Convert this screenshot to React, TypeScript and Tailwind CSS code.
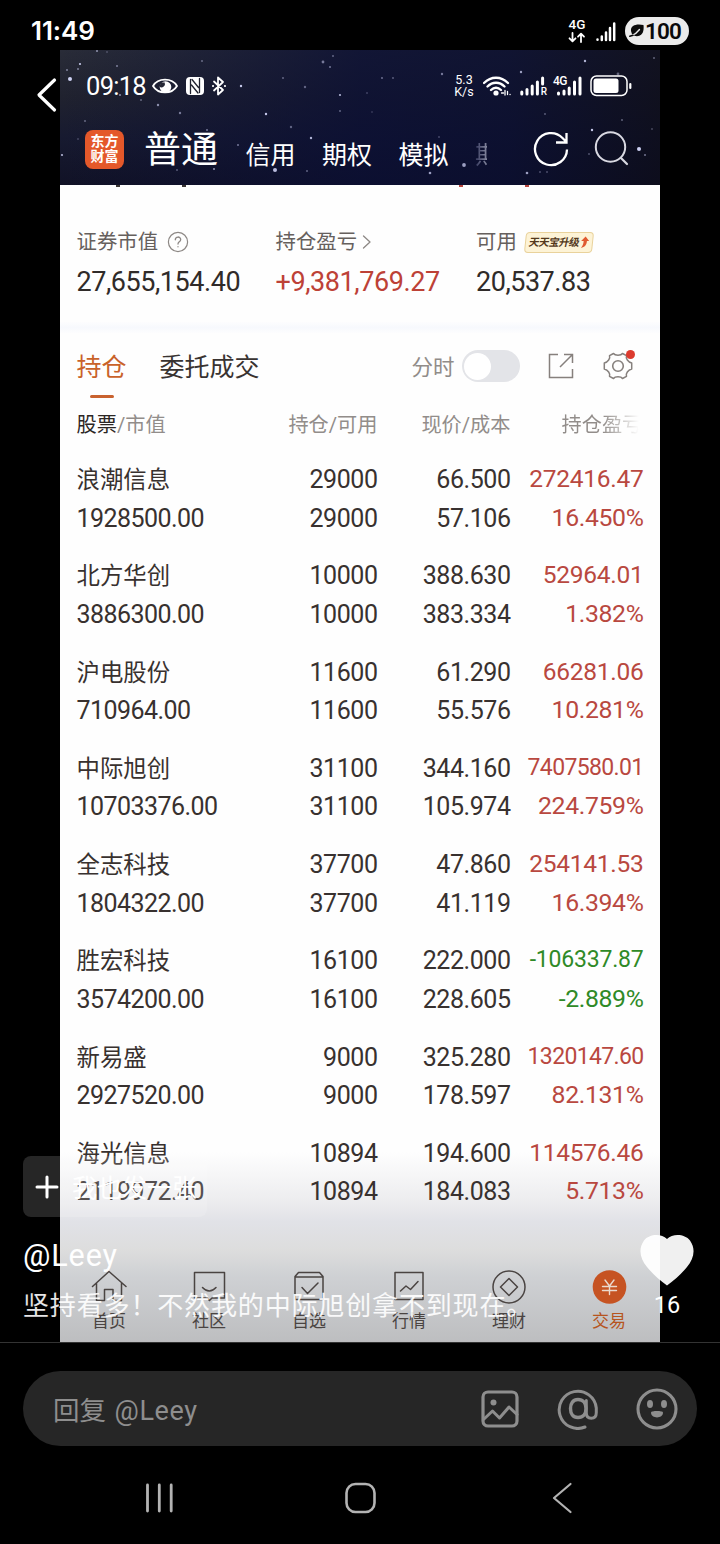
import React from "react";

const cjk = "font-['Roboto','Noto_Sans_CJK_SC',sans-serif]";

type Holding = {
  name: string;
  value: string;
  held: string;
  free: string;
  price: string;
  cost: string;
  profit: string;
  rate: string;
};

const holdings: Holding[] = [
  { name: "浪潮信息", value: "1928500.00", held: "29000", free: "29000", price: "66.500", cost: "57.106", profit: "272416.47", rate: "16.450%" },
  { name: "北方华创", value: "3886300.00", held: "10000", free: "10000", price: "388.630", cost: "383.334", profit: "52964.01", rate: "1.382%" },
  { name: "沪电股份", value: "710964.00", held: "11600", free: "11600", price: "61.290", cost: "55.576", profit: "66281.06", rate: "10.281%" },
  { name: "中际旭创", value: "10703376.00", held: "31100", free: "31100", price: "344.160", cost: "105.974", profit: "7407580.01", rate: "224.759%" },
  { name: "全志科技", value: "1804322.00", held: "37700", free: "37700", price: "47.860", cost: "41.119", profit: "254141.53", rate: "16.394%" },
  { name: "胜宏科技", value: "3574200.00", held: "16100", free: "16100", price: "222.000", cost: "228.605", profit: "-106337.87", rate: "-2.889%" },
  { name: "新易盛", value: "2927520.00", held: "9000", free: "9000", price: "325.280", cost: "178.597", profit: "1320147.60", rate: "82.131%" },
  { name: "海光信息", value: "2119972.40", held: "10894", free: "10894", price: "194.600", cost: "184.083", profit: "114576.46", rate: "5.713%" },
];

const stars: [number, number, number, number][] = [
  [10, 29, 2, 0.95], [20, 14, 1.1, 0.9], [18, 19, 1, 0.5], [7, 20, 1, 0.5], [37, 1, 1, 0.6], [47, 2, 0.8, 0.4],
  [57, 16, 1, 0.5], [98, 55, 1.2, 0.6], [120, 63, 1.2, 0.5], [81, 50, 1, 0.4], [60, 45, 1, 0.6], [181, 36, 1.2, 0.9],
  [142, 11, 1, 0.4], [206, 64, 1.2, 0.9], [223, 28, 1, 0.4], [263, 12, 1.4, 0.5], [270, 17, 1, 0.5], [273, 6, 1, 0.4],
  [245, 37, 1.2, 0.4], [280, 45, 1.1, 0.8], [280, 61, 1, 0.4], [231, 77, 1.2, 0.4], [251, 88, 1.2, 0.8], [215, 120, 2, 0.85],
  [147, 80, 1, 0.5], [25, 71, 1, 0.4], [2, 105, 1.1, 0.8], [18, 89, 0.8, 0.4], [178, 95, 1, 0.5], [154, 119, 1.1, 0.6],
  [117, 120, 0.9, 0.4], [247, 121, 1, 0.4], [322, 28, 0.9, 0.5], [333, 28, 0.9, 0.4], [382, 24, 1.2, 0.5], [307, 43, 0.8, 0.4],
  [312, 62, 0.8, 0.3], [461, 22, 1.2, 0.7], [525, 11, 1.2, 0.8], [558, 24, 1.4, 0.4], [594, 8, 1, 0.4], [485, 64, 0.9, 0.4],
  [562, 70, 1, 0.4], [532, 80, 1.2, 0.9], [579, 99, 2, 0.95], [585, 105, 1, 0.5], [404, 115, 1.9, 0.7], [370, 123, 1.3, 0.7],
  [467, 123, 1.3, 0.7], [480, 122, 1, 0.3], [487, 122, 1, 0.3], [379, 87, 0.9, 0.3], [529, 104, 1.1, 0.3], [592, 79, 0.9, 0.3],
];

function Svg({ w, h, children, className = "" }: { w: number; h: number; children: React.ReactNode; className?: string }) {
  return (
    <svg
      width={w}
      height={h}
      viewBox={`0 0 ${w} ${h}`}
      fill="none"
      stroke="currentColor"
      strokeLinecap="round"
      strokeLinejoin="round"
      className={`block shrink-0 ${className}`}
    >
      {children}
    </svg>
  );
}

function DeviceStatus() {
  return (
    <div className="flex h-[50px] items-center justify-between pt-[11px] pr-[31px] pb-0 pl-[31px] text-white">
      <span className="font-['Inter',sans-serif] text-[26px] leading-[40px] font-semibold tracking-[-0.1px]">11:49</span>
      <div className="flex items-center">
        <div className="flex w-[18px] flex-col items-center">
          <span className="font-['Roboto',sans-serif] text-[13.500px] leading-[11px] font-medium">4G</span>
          <Svg w={18} h={11} className="mt-[2px]">
            <path d="M4.5 1v8M1.5 6.3l3 3 3-3M13 10V2M10 4.7l3-3 3 3" strokeWidth={1.8} />
          </Svg>
        </div>
        <Svg w={20} h={20} className="mt-[3px] ml-[10px]">
          <path d="M1.500 17.500v.3M5.800 14.500v3.500M10 10.500V18M14 6v12M18.200 1.500V18" strokeWidth={2.500} />
        </Svg>
        <div className="ml-[9px] flex h-[28px] w-[64px] items-center rounded-full bg-[#ebebeb] pl-[4px] text-[#0a0a0a]">
          <Svg w={16} h={16}>
            <path d="M3 11C-.5 4 5 0 14.500 2c.8 7-1.500 12-8.500 11z" fill="currentColor" stroke="none" />
            <path d="M2 13C4.500 12 8 10 10.500 6.500" stroke="#ebebeb" strokeWidth={1.300} />
            <path d="M.8 13.300 4 12.300" strokeWidth={1.500} />
          </Svg>
          <span className="font-['Roboto',sans-serif] text-[22.500px] leading-[28px] font-semibold tracking-[-0.800px]">100</span>
        </div>
      </div>
    </div>
  );
}

function SkyHeader() {
  return (
    <header className="relative h-[135px] shrink-0 overflow-hidden bg-[linear-gradient(180deg,#292c38_0%,#20222f_35%,#171a30_65%,#111226_100%)] text-white">
      <div className="absolute inset-0 bg-[linear-gradient(90deg,transparent_0%,rgba(10,14,52,0.75)_50%,rgba(10,14,48,0.8)_75%,rgba(12,12,26,0.8)_100%)]" />
      <svg className="absolute inset-0" width="600" height="135" viewBox="0 0 600 135">
        {stars.map(([x, y, r, o]) => (
          <circle key={`${x}-${y}`} cx={x} cy={y} r={r} fill="#d9dcff" opacity={o} />
        ))}
      </svg>
      <div className="relative flex h-[72px] items-center justify-between pr-[28px] pl-[26px]">
        <div className="flex items-center">
          <span className="font-['Roboto',sans-serif] text-[25.500px] leading-[30px] tracking-[-0.700px]">09:18</span>
          <Svg w={26} h={20} className="ml-[6px]">
            <path d="M1 10C6 1.500 20 1.500 25 10 20 18.500 6 18.500 1 10z" strokeWidth={1.800} />
            <circle cx="13.500" cy="11" r="5.800" fill="currentColor" stroke="none" />
            <path d="M8.500 6.500h4.200a3.600 3.600 0 0 1-5 4.500z" fill="#252735" stroke="none" />
          </Svg>
          <Svg w={18} h={18} className="ml-[8px]">
            <rect x="0" y="0" width="18" height="18" rx="4" fill="currentColor" stroke="none" />
            <path d="M4.500 16.500V2.500M13.500 15.500V1.500M6 2.500l6.500 8M5.500 8l6.500 8" stroke="#20222f" strokeWidth={1.300} />
          </Svg>
          <Svg w={14} h={20} className="ml-[8px]">
            <path d="m2 5.500 9 8.500-5 4.500v-17L11 6l-9 8.500" strokeWidth={1.800} />
            <path d="M0.900 10h.2M12.900 10h.2" strokeWidth={2} />
          </Svg>
        </div>
        <div className="flex items-center">
          <div className="mr-[9px] flex w-[20px] flex-col items-center font-['Roboto',sans-serif] text-[12.500px] leading-[12px]">
            <span>5.3</span>
            <span>K/s</span>
          </div>
          <Svg w={28} h={20}>
            <path d="M1 7c7-7 17-7 24 0M4.500 10.500c5-5 12-5 17 0M8 14c3-3 7-3 10 0" strokeWidth={2.300} />
            <circle cx="13" cy="17" r="2.600" fill="currentColor" stroke="none" />
            <path d="M18.500 17h2M22 14.500v4.500M24.500 15.500v3M27 18.500h.1" strokeWidth={1.300} />
          </Svg>
          <div className="relative ml-[9px]">
            <Svg w={27} h={20}>
              <path d="M1.800 16v2M7 13.500V18M12.200 10v8M17.400 6v12M22.600 2v6" strokeWidth={3} />
            </Svg>
            <span className="absolute right-0 bottom-0 font-['Roboto',sans-serif] text-[10px] leading-[9px] font-medium">R</span>
          </div>
          <div className="relative ml-[6px]">
            <Svg w={30} h={20}>
              <path d="M5.500 17v1M11 15v3M16.200 12v6M21.500 6v12M27 2v16" strokeWidth={3} />
            </Svg>
            <span className="absolute top-[-1px] left-0 font-['Roboto',sans-serif] text-[12px] leading-[12px] font-medium tracking-[-0.500px]">4G</span>
          </div>
          <Svg w={42} h={22} className="ml-[7px]">
            <rect x="1" y="1" width="36" height="19.500" rx="5.500" strokeWidth={1.500} />
            <rect x="3.500" y="3.500" width="25" height="14.500" rx="2.500" fill="currentColor" stroke="none" />
            <path d="M40.300 9v4" strokeWidth={2.200} />
          </Svg>
        </div>
      </div>
      <nav className={`relative flex h-[54px] items-center pl-[25px] ${cjk}`}>
        <div className="flex h-[39px] w-[39px] flex-col items-center justify-center rounded-[8px] bg-[#e4582a] text-[14px] leading-[15.500px] font-bold">
          <span>东方</span>
          <span>财富</span>
        </div>
        <span className="ml-[20px] pt-[4px] text-[37px] leading-[54px]">普通</span>
        <div className="flex items-center gap-[26.500px] pt-[14px] pl-[27.500px] text-[25px] leading-[30px]">
          <span>信用</span>
          <span>期权</span>
          <span>模拟</span>
          <span className="w-[12px] overflow-hidden bg-[linear-gradient(90deg,#34375c,#85889f)] bg-clip-text text-transparent">期</span>
        </div>
        <Svg w={36} h={36} className="absolute top-[9px] left-[473px]">
          <path d="M34 18.500A16 16 0 1 1 29.500 7l4 4M33.500 2v9.500H23" strokeWidth={2.300} strokeLinecap="butt" strokeLinejoin="miter" />
        </Svg>
        <Svg w={36} h={36} className="absolute top-[8px] left-[534px] text-[#d9d9e2]">
          <circle cx="16.500" cy="17" r="14.700" strokeWidth={2} />
          <path d="m27 28 6 6" strokeWidth={2.200} />
        </Svg>
      </nav>
    </header>
  );
}

function Summary() {
  return (
    <section className={`flex h-[137px] pt-[41px] pl-[16.500px] ${cjk}`}>
      <div className="w-[199px]">
        <div className="flex h-[32px] items-center text-[20.400px] text-[#66605d]">
          证券市值
          <Svg w={22} h={22} className="ml-[9px] text-[#8d8885]">
            <circle cx="11" cy="11" r="9.600" strokeWidth={1.200} />
            <path d="M8.300 8.800c0-3.700 5.400-3.600 5.400-.3 0 2.300-2.700 2.400-2.700 4.500M11 15.600v.2" strokeWidth={1.300} />
          </Svg>
        </div>
        <div className="mt-[4px] text-[27px] leading-[40px] tracking-[-0.450px] text-[#302b29]">27,655,154.40</div>
      </div>
      <div className="w-[200px]">
        <div className="flex h-[32px] items-center text-[20.400px] text-[#66605d]">
          持仓盈亏
          <Svg w={10} h={14} className="ml-[5px] text-[#8d8885]">
            <path d="m1.500 1 6.500 6-6.500 6" strokeWidth={1.300} />
          </Svg>
        </div>
        <div className="mt-[4px] text-[27px] leading-[40px] tracking-[-0.420px] text-[#bd4136]">+9,381,769.27</div>
      </div>
      <div className="pl-[0.500px]">
        <div className="flex h-[32px] items-center text-[20.400px] text-[#66605d]">
          可用
          <div className="ml-[8px] flex h-[21px] w-[68px] -skew-x-6 items-center justify-center rounded-[4px] border border-[#e9d29b] bg-[#fdf3d6] text-[10.500px] leading-[20px] font-bold tracking-[-0.500px] text-[#54391c]">
            <span className="-skew-x-6">天天宝升级</span>
            <Svg w={9} h={13} className="ml-px text-[#e05a31]">
              <path d="M5 .5 9 5H6.800c0 4-1.500 6-5.300 7C3.500 9 3.500 7.500 3.500 5H1z" fill="currentColor" stroke="none" />
            </Svg>
          </div>
        </div>
        <div className="mt-[4px] text-[27px] leading-[40px] tracking-[-0.480px] text-[#302b29]">20,537.83</div>
      </div>
    </section>
  );
}

function Tabs() {
  return (
    <div className={`flex h-[66px] items-center pl-[16.500px] text-[25px] leading-[36px] ${cjk}`}>
      <div className="relative pt-[3px] text-[#c9622a]">
        持仓
        <span className="absolute top-[48px] left-[13px] h-[3px] w-[24px] rounded-full bg-[#c9622f]" />
      </div>
      <span className="ml-[33px] pt-[4px] text-[#393331]">委托成交</span>
      <span className="ml-[152px] pt-[3px] text-[21.500px] text-[#918c89]">分时</span>
      <div className="ml-[7px] flex h-[32px] w-[58px] items-center rounded-full bg-[#e3e4e8] pl-[2px]">
        <span className="h-[27px] w-[27px] rounded-full bg-white" />
      </div>
      <Svg w={26} h={26} className="ml-[28px] text-[#86807d]">
        <path d="M10 1.500H1.500v23h23V16M12 14 24 2M16 1.500h8.500V10" strokeWidth={1.500} strokeLinecap="butt" strokeLinejoin="miter" />
      </Svg>
      <div className="relative ml-[29px]">
        <Svg w={30} h={30} className="text-[#86807d]">
          <path
            d="M10.500 2.500C12 4.800 18 4.800 19.500 2.500L23.500 4.700C22.500 7.500 25 11 28.700 12v6C25 19 22.500 22.500 23.500 25.300L19.500 27.500C18 25.200 12 25.200 10.500 27.500L6.500 25.300C7.500 22.500 5 19 1.300 18v-6C5 11 7.500 7.500 6.500 4.700z"
            strokeWidth={1.500}
          />
          <circle cx="15" cy="15" r="5.300" strokeWidth={1.600} />
        </Svg>
        <span className="absolute top-[-1px] right-[-2px] h-[9px] w-[9px] rounded-full bg-[#dc3b2e]" />
      </div>
    </div>
  );
}

const cols = "grid grid-cols-[152px_149px_133px_133px]";

function TableHead() {
  return (
    <div className={`${cols} mt-[11px] h-[30px] pl-[16.500px] text-[20.200px] leading-[31px] whitespace-nowrap text-[#928d8a] ${cjk}`}>
      <span>
        <span className="text-[#2c2624]">股票</span>/市值
      </span>
      <span className="text-right">持仓/可用</span>
      <span className="text-right">现价/成本</span>
      <span className="ml-[51px] bg-[linear-gradient(90deg,#928d8a_0%,#928d8a_50%,#ffffff_94%)] bg-clip-text text-transparent">持仓盈亏</span>
    </div>
  );
}

function HoldingRow({ item }: { item: Holding }) {
  const negative = item.profit.startsWith("-");
  const tone = negative ? "text-[#2f8a27]" : "text-[#b94840]";
  const size = negative
    ? "text-[23px] tracking-[-0.200px]"
    : item.profit.length > 9
      ? "text-[23px] tracking-[-0.650px]"
      : "text-[24.500px] tracking-[-0.250px]";
  return (
    <div className={`${cols} h-[77px] pl-[16.500px] text-[25px] leading-[38.500px] tracking-[-0.450px] whitespace-nowrap text-[#38312f] ${cjk}`}>
      <div className="flex flex-col">
        <span className="text-[23.400px] tracking-normal">{item.name}</span>
        <span className="tracking-[-0.550px]">{item.value}</span>
      </div>
      <div className="flex flex-col text-right">
        <span>{item.held}</span>
        <span>{item.free}</span>
      </div>
      <div className="flex flex-col text-right">
        <span>{item.price}</span>
        <span>{item.cost}</span>
      </div>
      <div className={`-mt-px flex flex-col text-right ${tone}`}>
        <span className={size}>{item.profit}</span>
        <span className="text-[24.800px] tracking-[-0.350px]">{item.rate}</span>
      </div>
    </div>
  );
}

const tabIcons: { label: string; art: React.ReactNode }[] = [
  { label: "首页", art: <path d="M1.500 16.500 18 1.500l17 15M5.500 13.500v17h8V19.500h8.500v11h8.500V13.500" /> },
  { label: "社区", art: <path d="M3.500 2.500h30v25.500H21L18.500 30.500l-2.500-2.500H3.500zM11.500 17.500c4 4.500 9.500 4.500 13.500 0" /> },
  { label: "自选", art: <path d="M4 6.500 7.500 2.500h21L32 6.500V29.500H4zM4 7h28M11 17.500l5.500 6L27 13" /> },
  { label: "行情", art: <path d="M4 2.500h28v27H4zM9.500 21l5.500-5 4.500 3.500 7.500-8" /> },
  {
    label: "理财",
    art: (
      <>
        <circle cx="18" cy="17" r="16" />
        <path d="m18 8.500 8.500 8.500-8.500 8.500L9.500 17z" />
      </>
    ),
  },
  {
    label: "交易",
    art: (
      <>
        <circle cx="18.500" cy="17" r="16.800" fill="#c65322" stroke="none" />
        <path d="m14 10 4.500 6 4.500-6M18.500 16v8.500M11.500 16.500h14M11.500 20.500h14" stroke="#ead9ce" strokeWidth="1.400" />
      </>
    ),
  },
];

function BottomTabs() {
  return (
    <nav className={`mt-auto flex h-[72px] ${cjk}`}>
      {tabIcons.map(({ label, art }) => (
        <div key={label} className={`flex w-[100px] flex-col items-center pr-[2px] ${label === "交易" ? "text-[#b65520]" : "text-[#4a4442]"}`}>
          <Svg w={36} h={36}>
            <g strokeWidth={1.500}>{art}</g>
          </Svg>
          <span className="mt-[3px] text-[17px] leading-[24px]">{label}</span>
        </div>
      ))}
    </nav>
  );
}

function CommentOverlay() {
  return (
    <div className={`absolute top-[1156px] left-[23px] text-white ${cjk}`}>
      <div className="flex h-[61px] w-[184px] items-center rounded-[8px] bg-white/15 pl-[12px]">
        <Svg w={24} h={24}>
          <path d="M12 2v20M2 12h20" strokeWidth={3} />
        </Svg>
        <span className="ml-[13px] pt-[5px] text-[25px] leading-[40px] whitespace-nowrap">我也发一张</span>
      </div>
      <div className="mt-[19px] text-[30.500px] leading-[40px] tracking-[0.900px]">@Leey</div>
      <div className="mt-[10px] text-[26px] leading-[40px] tracking-[0.850px] whitespace-nowrap text-white/90">
        坚持看多！不然我的中际旭创拿不到现在。
      </div>
    </div>
  );
}

function ReplyBar() {
  return (
    <div className="px-[23px] pt-[28px]">
      <div className={`flex h-[75px] items-center rounded-full bg-[#262626] pr-[18px] pl-[30px] text-[#8e8e8e] ${cjk}`}>
        <span className="flex-1 pt-[5px] text-[26.500px] leading-[40px]">
          回复 <span className="ml-[2px] text-[27px] tracking-[0.600px]">@Leey</span>
        </span>
        <Svg w={38} h={38}>
          <rect x="2" y="2" width="34" height="34" rx="5" strokeWidth={3.200} />
          <circle cx="12.500" cy="12.500" r="3" fill="currentColor" stroke="none" />
          <path d="m3 29 8.500-8 7 7L28 17l8 7.500" strokeWidth={3} />
        </Svg>
        <Svg w={42} h={42} className="ml-[38px]">
          <path d="M28 39A18.600 18.600 0 1 1 39.300 20v4.500c0 3.500-1.800 5.800-5 5.800s-5-2-5-5.500V12.500" strokeWidth={3} />
          <path d="M29 20.500c0 5.500-2.800 9-8 9s-7.500-4-7.500-9 2.500-9 7.500-9 8 3.500 8 9z" strokeWidth={3.400} />
        </Svg>
        <Svg w={42} h={42} className="ml-[37px]">
          <circle cx="21" cy="21" r="19" strokeWidth={3.100} />
          <ellipse cx="14" cy="16" rx="3" ry="4" fill="currentColor" stroke="none" />
          <ellipse cx="28" cy="16" rx="3" ry="4" fill="currentColor" stroke="none" />
          <path d="M15 24.500c0-2 12-2 12 0 0 6.500-12 6.500-12 0z" fill="currentColor" stroke="none" />
        </Svg>
        <span className="w-px" />
      </div>
    </div>
  );
}

function SystemNav() {
  return (
    <div className="flex h-[103px] items-center text-[#b3b3b3]">
      <Svg w={30} h={32} className="ml-[144px]">
        <path d="M3.500 3v26M15.300 3v26M27.200 3v26" strokeWidth={2.800} />
      </Svg>
      <Svg w={32} h={32} className="ml-[170px]">
        <rect x="2.500" y="2" width="28" height="28" rx="9" strokeWidth={2.600} />
      </Svg>
      <Svg w={22} h={32} className="ml-[175px]">
        <path d="M19.500 2 3 16l16.500 14" strokeWidth={2.200} />
      </Svg>
    </div>
  );
}

export default function App() {
  return (
    <div className="relative h-[1544px] w-[720px] overflow-hidden bg-black">
      <DeviceStatus />
      <main className="mx-auto flex h-[1292px] w-[600px] flex-col bg-[linear-gradient(180deg,#fefefe_0px,#fefefe_1102px,#ededef_1150px,#e1e2e7_1172px,#dddddd_1200px,#cfd1d4_1225px,#bdbec0_1292px)]">
        <SkyHeader />
        <div className="flex h-[2px] shrink-0 pl-[56px]">
          <i className="h-[2px] w-[4px] bg-[#3a3533]" />
          <i className="ml-[62px] h-[2px] w-[4px] bg-[#3a3533]" />
          <i className="ml-[273px] h-[2px] w-[4px] bg-[#b94840]" />
          <i className="ml-[62px] h-[2px] w-[4px] bg-[#b94840]" />
        </div>
        <div className="-mt-[2px]">
          <Summary />
        </div>
        <div className="h-[11px] bg-[linear-gradient(180deg,#fdfdfe,#f7f9fd,#fdfdfe)]" />
        <Tabs />
        <TableHead />
        <div className="mt-[21px] flex flex-col gap-[19.250px]">
          {holdings.map((item) => (
            <HoldingRow key={item.name} item={item} />
          ))}
        </div>
        <BottomTabs />
      </main>
      <div className="h-px bg-[#333333]" />
      <ReplyBar />
      <SystemNav />

      <Svg w={24} h={36} className="absolute top-[77px] left-[35px] text-white">
        <path d="M19.500 3 4 18l15.500 15" strokeWidth={3.200} />
      </Svg>
      <CommentOverlay />
      <div className="absolute top-[1234px] left-[639px] flex w-[56px] flex-col items-center text-white">
        <Svg w={56} h={53}>
          <path d="M28 5C22-1 10 0 5 6.500-1 15 1 25 8 33c5 6 12 13 20 18.500C36 46 43 39 48 33 55 25 57 15 51 6.500 46 0 34-1 28 5z" fill="currentColor" fillOpacity={0.940} stroke="none" />
        </Svg>
        <span className="mt-[3px] font-['Roboto',sans-serif] text-[23.500px] leading-[30px]">16</span>
      </div>
    </div>
  );
}
